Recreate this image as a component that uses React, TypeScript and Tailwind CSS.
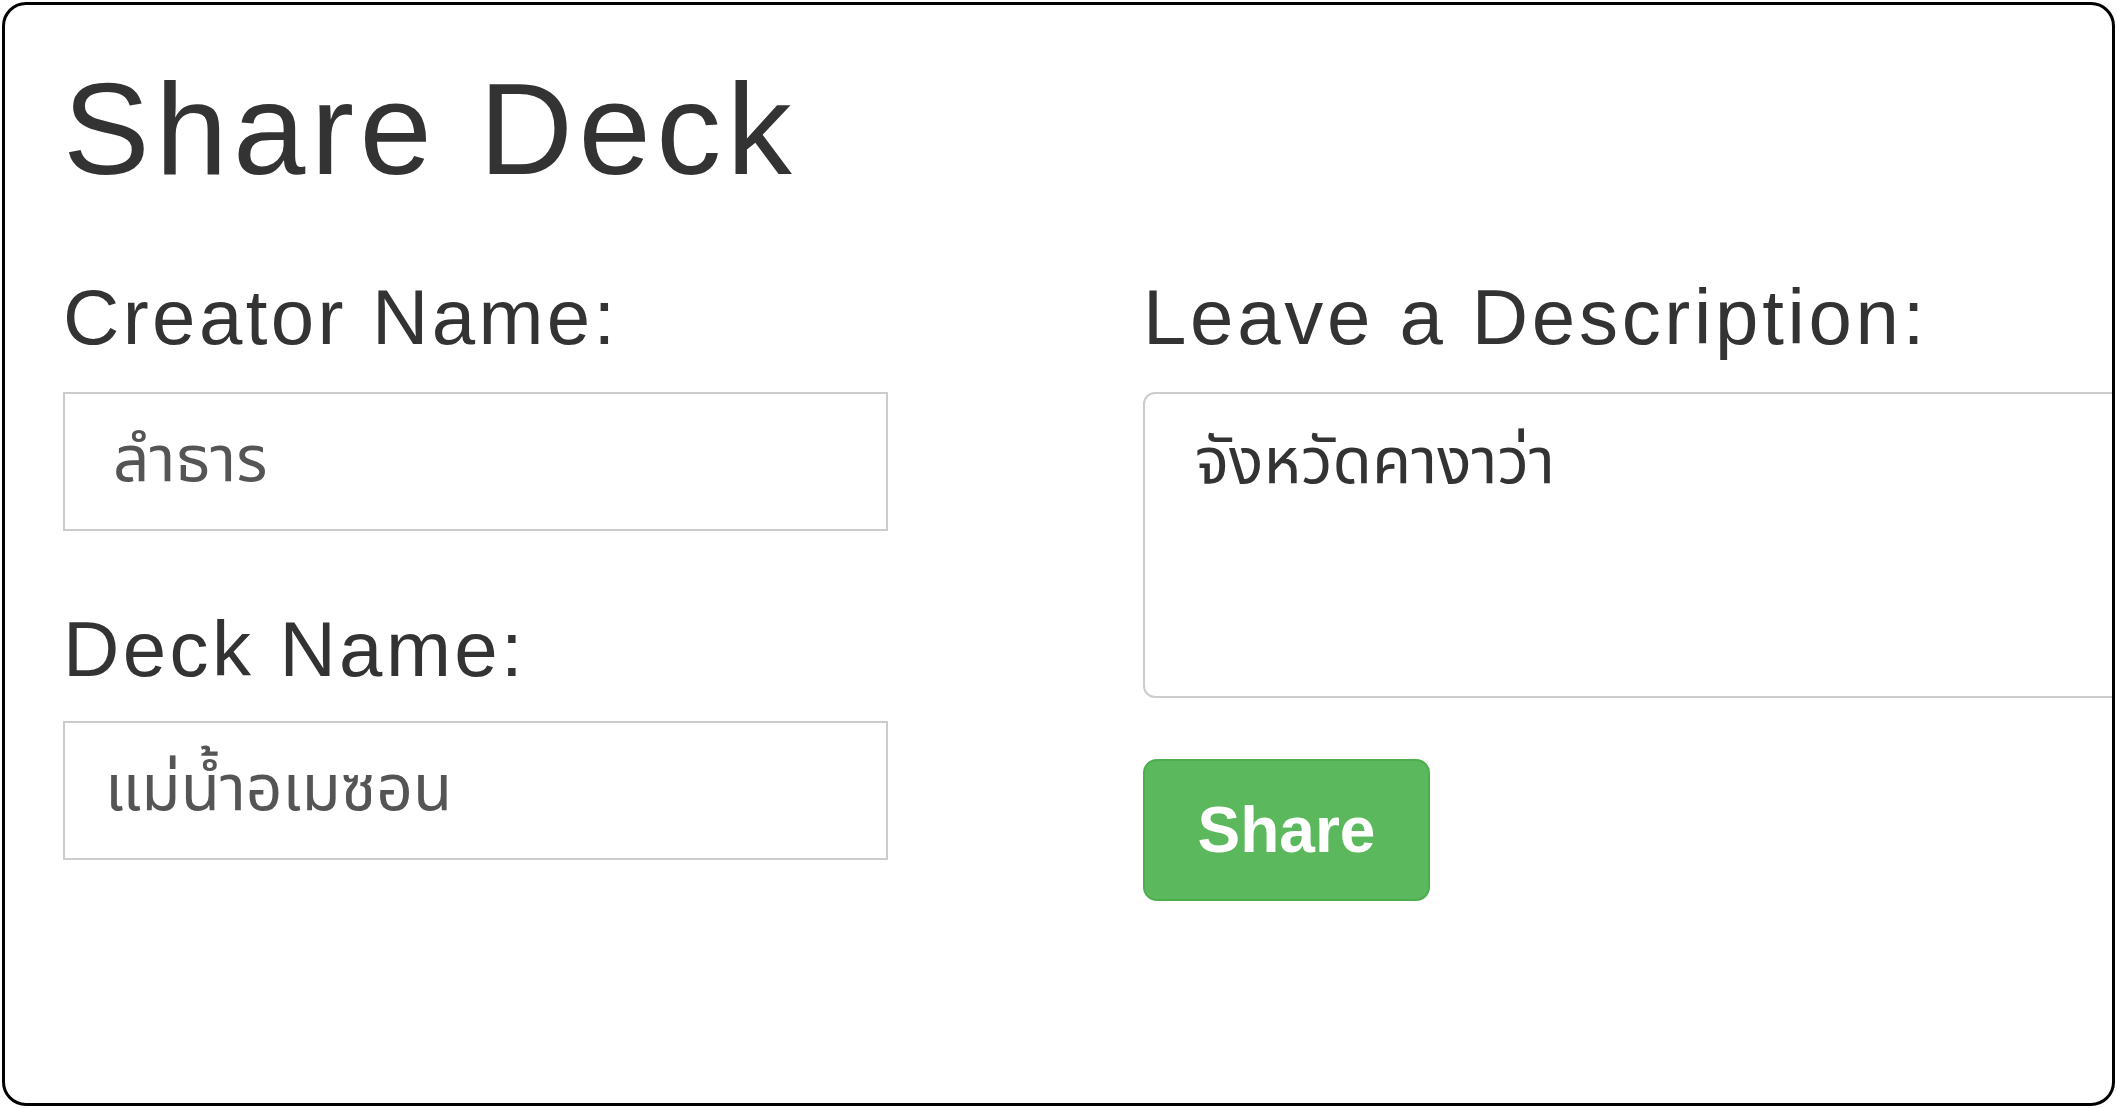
export default function App() {
  return (
    <div className="h-screen w-screen bg-white p-[2px]">
      <div className="h-full w-full overflow-hidden rounded-[24px] border-[3px] border-black bg-white pl-[58px] text-[#333]" style={{ fontFamily: '"Liberation Sans", "Noto Sans Thai", "Noto Sans", sans-serif' }}>
        <h1 className="mt-[53px] text-[130px] leading-[1.1] font-normal tracking-[5.5px]">Share Deck</h1>

        <div className="mt-[74px] flex gap-[255px]">
          {/* left column */}
          <div className="flex w-[825px] shrink-0 flex-col">
            <label className="text-[78px] leading-[1.1] tracking-[3.4px]">Creator Name:</label>
            <input
              defaultValue="ลำธาร"
              className="mt-[31px] h-[139px] w-full border-2 border-[#ccc] px-[48px] text-[64px] text-[#555] outline-none"
            />
            <label className="mt-[76px] text-[78px] leading-[1.1] tracking-[3.4px]">Deck Name:</label>
            <input
              defaultValue="แม่น้ำอเมซอน"
              className="mt-[28px] h-[139px] w-full border-2 border-[#ccc] px-[40px] text-[64px] text-[#555] outline-none"
            />
          </div>

          {/* right column */}
          <div className="flex shrink-0 flex-col items-start">
            <label className="text-[78px] leading-[1.1] tracking-[3.7px]">Leave a Description:</label>
            <textarea
              defaultValue="จังหวัดคางาว่า"
              className="mt-[31px] h-[306px] w-[1100px] resize-none rounded-[12px] border-2 border-[#ccc] px-[50px] pt-[22px] text-[64px] leading-[1.43] text-[#333] outline-none"
            />
            <button className="mt-[61px] h-[142px] w-[287px] rounded-[14px] border-2 border-[#4cae4c] bg-[#5cb85c] text-[64px] font-bold text-white">
              Share
            </button>
          </div>
        </div>
      </div>
    </div>
  );
}
